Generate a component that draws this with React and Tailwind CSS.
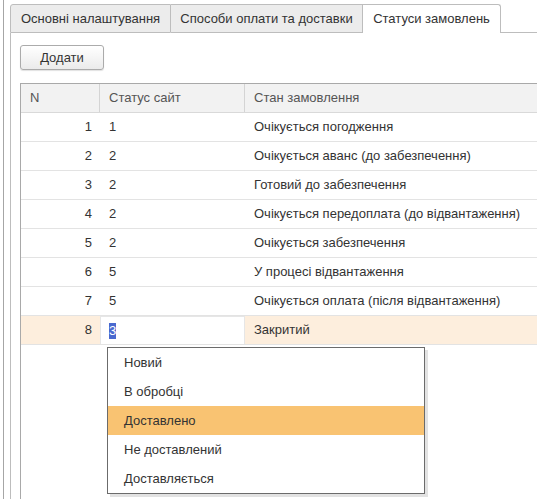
import React from 'react';

const rows = [
  { n: 1, site: '1', state: 'Очікується погодження' },
  { n: 2, site: '2', state: 'Очікується аванс (до забезпечення)' },
  { n: 3, site: '2', state: 'Готовий до забезпечення' },
  { n: 4, site: '2', state: 'Очікується передоплата (до відвантаження)' },
  { n: 5, site: '2', state: 'Очікується забезпечення' },
  { n: 6, site: '5', state: 'У процесі відвантаження' },
  { n: 7, site: '5', state: 'Очікується оплата (після відвантаження)' },
];

const options = ['Новий', 'В обробці', 'Доставлено', 'Не доставлений', 'Доставляється'];

const App = () => {
  return (
    <div className="relative w-[537px] h-[499px] overflow-hidden bg-white flex font-['Liberation_Sans',Arial,sans-serif] text-[13px] text-[#333]">
      <div className="ml-[3px] flex-1 flex flex-col border-l border-[#a6a6a6] pl-[6px] pt-[4px]">
        {/* tabs */}
        <div className="flex h-[29px] shrink-0">
          <div className="w-[161px] flex items-center justify-center bg-[#ececec] border border-[#bdbdbd] rounded-tl-[3px]">
            Основні налаштування
          </div>
          <div className="w-[192px] flex items-center justify-center bg-[#ececec] border-t border-r border-b border-[#bdbdbd]">
            Способи оплати та доставки
          </div>
          <div className="w-[138px] flex items-center justify-center bg-white border-t border-r border-[#bdbdbd] rounded-tr-[3px]">
            Статуси замовлень
          </div>
          <div className="flex-1 border-b border-[#bdbdbd]"></div>
        </div>

        {/* panel */}
        <div className="flex-1 flex flex-col border-l border-[#bdbdbd] pl-[9px] pt-[12px]">
          <button className="w-[84px] h-[25px] shrink-0 rounded-[3px] border border-[#ababab] bg-gradient-to-b from-white to-[#ebebeb] shadow-[0_1px_1px_rgba(0,0,0,0.12)] text-[#333]">
            Додати
          </button>

          <div className="mt-[13px] flex-1 flex flex-col border-l border-t border-[#a9a9a9]">
            <div className="grid grid-cols-[79px_145px_1fr] h-[29px] shrink-0 bg-[#f2f2f2] border-b border-[#d9d9d9] text-[#555]">
              <div className="flex items-center pl-[9px] border-r border-[#d4d4d4]">N</div>
              <div className="flex items-center pl-[9px] border-r border-[#d4d4d4]">Статус сайт</div>
              <div className="flex items-center pl-[9px]">Стан замовлення</div>
            </div>

            {rows.map((r) => (
              <div key={r.n} className="grid grid-cols-[79px_145px_1fr] h-[29px] shrink-0 border-b border-[#e3e3e3]">
                <div className="flex items-center justify-end pr-[8px]">{r.n}</div>
                <div className="flex items-center pl-[9px]">{r.site}</div>
                <div className="flex items-center pl-[9px]">{r.state}</div>
              </div>
            ))}

            <div className="grid grid-cols-[79px_145px_1fr] h-[29px] shrink-0 border-b border-[#e3e3e3]">
              <div className="flex items-center justify-end pr-[8px] bg-[#fdeedd]">8</div>
              <div className="flex items-center pl-[8px] bg-white border-t border-x border-[#e6e6e6]">
                <span className="bg-[#4a69cf] text-white leading-[16px]">3</span>
              </div>
              <div className="flex items-center pl-[9px] bg-[#fdeedd]">Закритий</div>
            </div>
          </div>
        </div>
      </div>

      {/* dropdown */}
      <div className="absolute left-[107px] top-[347px] w-[318px] bg-white border border-[#6b6b6b] shadow-[3px_3px_0_#e2e2e2]">
        {options.map((o) => (
          <div
            key={o}
            className={
              o === 'Доставлено'
                ? 'h-[29px] flex items-center pl-[16px] bg-[#f9c372]'
                : 'h-[29px] flex items-center pl-[16px]'
            }
          >
            {o}
          </div>
        ))}
      </div>
    </div>
  );
};

export default App;
